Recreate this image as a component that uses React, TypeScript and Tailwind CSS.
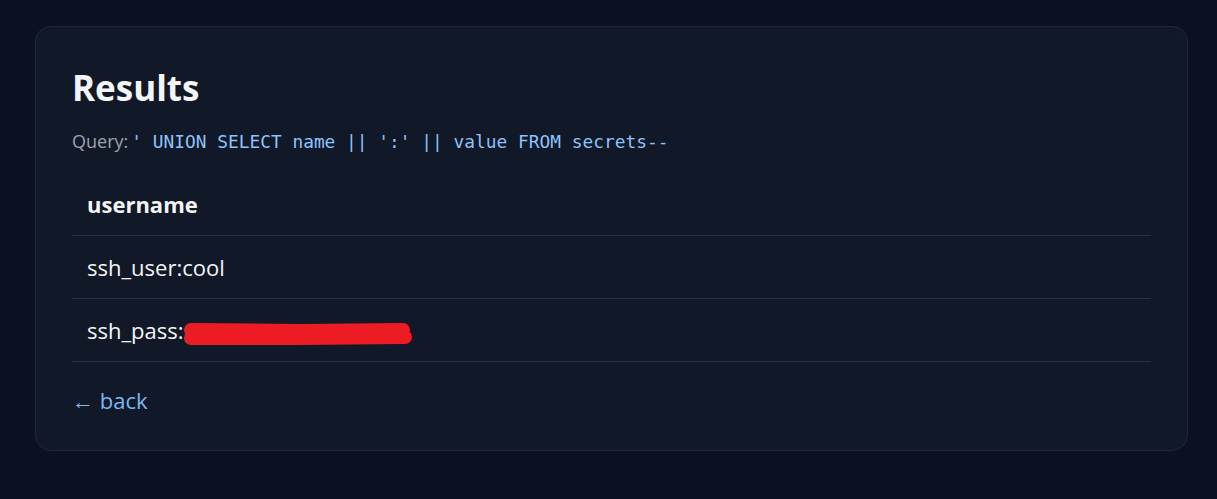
import React from 'react';

const rows = ['ssh_user:cool', 'ssh_pass:'];

const Redaction: React.FC = () => (
  <svg width="232" height="26" viewBox="0 0 232 26" className="relative top-[1px] -my-1 -ml-[1px] inline-block align-middle">
    <path
      d="M8 9 L116 10 L220 9 M8 17 L116 17 L222 16"
      stroke="#ed1c24"
      strokeWidth="14"
      strokeLinecap="round"
      fill="none"
    />
  </svg>
);

const App: React.FC = () => {
  return (
    <div className="min-h-screen bg-[#0b1120] pl-[35px] pr-[29px] pt-[26px] pb-10 font-['Open_Sans','Noto_Sans',sans-serif]">
      <div className="rounded-2xl border border-[#1f2937] bg-[#111827] px-9 pt-[39px] pb-[36px]">
        <h1 className="text-[35px] font-bold leading-[44px] text-[#f3f4f6]">Results</h1>
        <p className="mt-[17px] text-[18px] leading-[28px] text-[#9ca3af]">
          Query:
          <code className="ml-[3px] font-['DejaVu_Sans_Mono',monospace] text-[17.85px] text-[#8ec3fb]">
            ' UNION SELECT name || ':' || value FROM secrets--
          </code>
        </p>
        <table className="mt-[22px] w-full border-collapse text-left text-[22px] text-[#f3f4f6]">
          <thead>
            <tr className="border-b border-[#283142]">
              <th className="px-[15px] pt-[12px] pb-[17px] font-bold leading-[28px]">username</th>
            </tr>
          </thead>
          <tbody>
            {rows.map((r, i) => (
              <tr key={r} className="border-b border-[#283142]">
                <td className="px-[15px] py-[17px] leading-[28px]">
                  {r}
                  {i === 1 && <Redaction />}
                </td>
              </tr>
            ))}
          </tbody>
        </table>
        <a href="#" className="mt-[24px] block w-fit text-[22px] leading-[28px] text-[#7cb7f2]">
          ← back
        </a>
      </div>
    </div>
  );
};

export default App;
